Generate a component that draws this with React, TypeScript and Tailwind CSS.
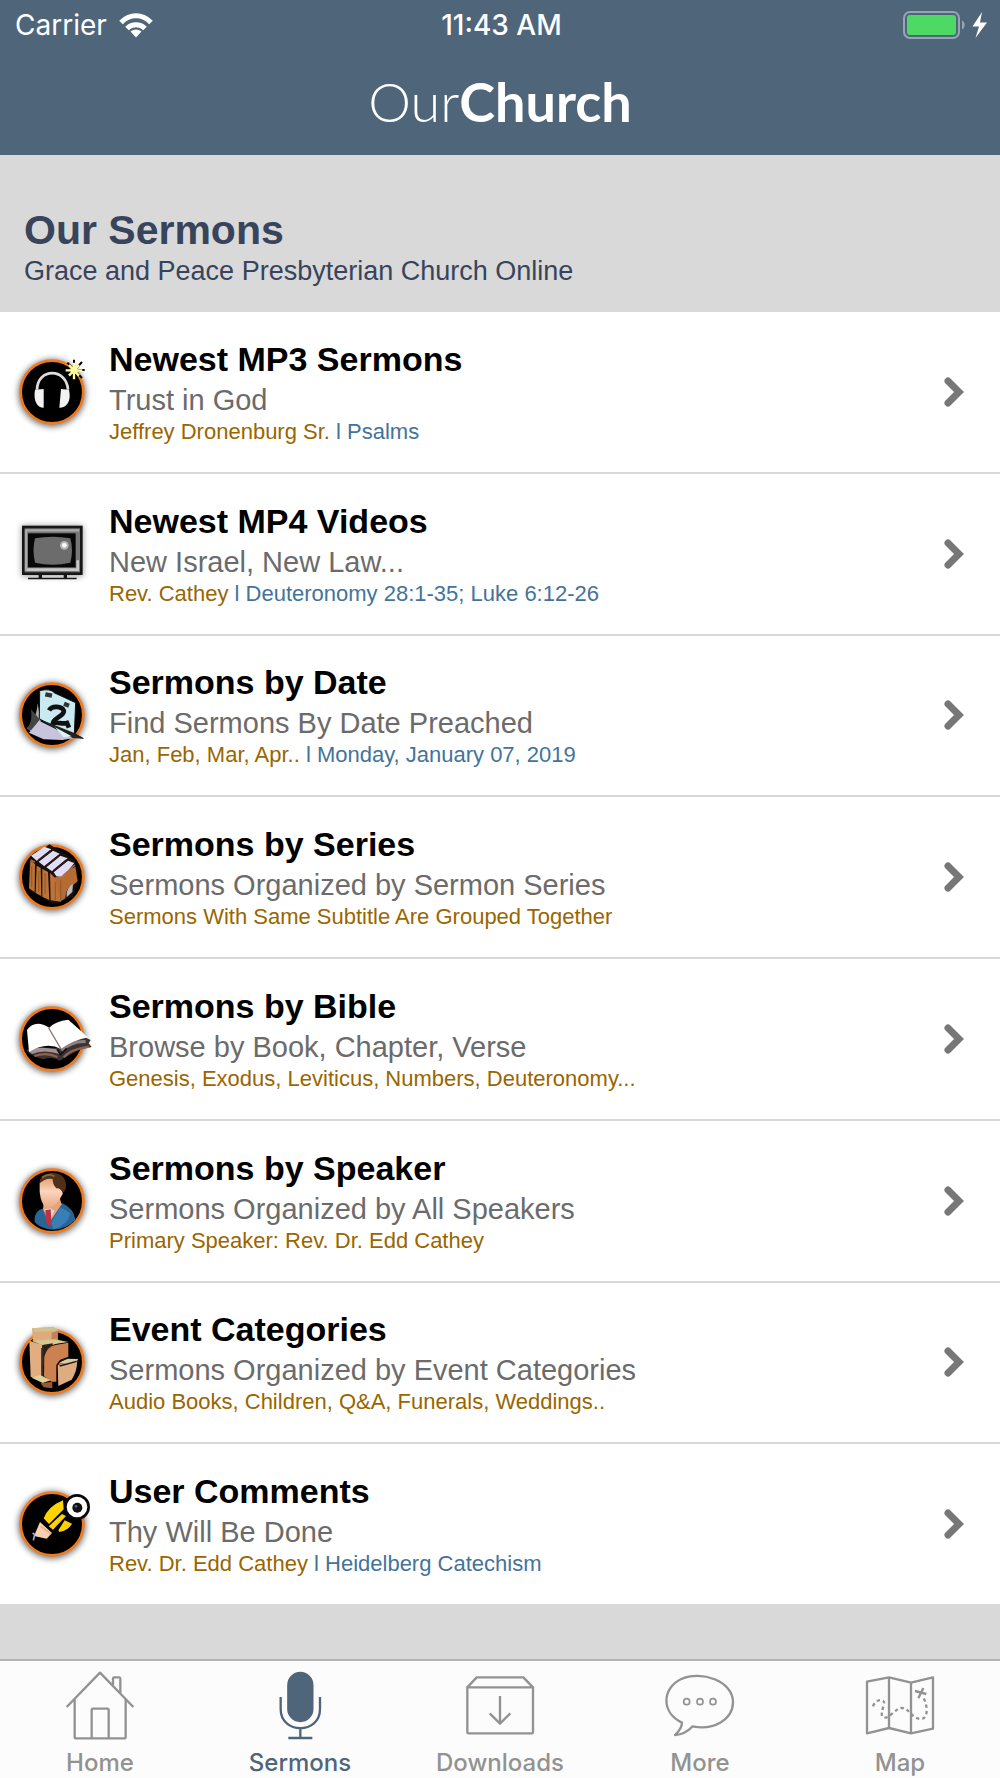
import type { ReactNode } from "react";

const WifiIcon = () => (
  <svg width="34" height="26" viewBox="0 0 34 26" aria-hidden="true">
    <g fill="none" stroke="#fff" strokeWidth="5">
      <path d="M2 10.5C10.500 1.500 23.500 1.500 32 10.500" />
      <path d="M8 16.500C13 11.500 21 11.500 26 16.500" />
    </g>
    <path d="M17 25.500L11.500 19.500C14.500 16.800 19.500 16.800 22.500 19.500Z" fill="#fff" />
  </svg>
);

const BatteryIcon = () => (
  <svg width="85" height="28" viewBox="0 0 85 28" aria-hidden="true">
    <rect x="1" y="1" width="55" height="26" rx="6" fill="none" stroke="#97a5b2" strokeWidth="2" />
    <rect x="4" y="4" width="49" height="20" rx="3" fill="#4cd964" />
    <path d="M59 9.500C62.500 10.500 62.500 17.500 59 18.500Z" fill="#97a5b2" />
    <path d="M79 1L69.500 15.500H76L72.500 27L84 11.500H77Z" fill="#fff" />
  </svg>
);

// black disc with the orange ring, shared by most of the list icons
const Disc = ({ cy }: { cy: number }) => (
  <>
    <circle cx="155" cy={cy + 3} r="101" fill="#000" opacity="0.55" filter="url(#glow)" />
    <circle cx="155" cy={cy} r="94" fill="#000" stroke="#f07a1c" strokeWidth="8" />
  </>
);

const HeadphonesIcon = () => (
  <g transform="translate(-35 -95)">
    <Disc cy={215} />
    <path d="M110 208C112 142 198 142 203 208" fill="none" stroke="#ddd" strokeWidth="8" />
    <path d="M104 208L130 206V262C112 262 98 244 104 208Z" fill="#f2f2f2" />
    <path d="M206 208L182 206L177 262C198 262 214 244 206 208Z" fill="#f2f2f2" />
    <g stroke="#000" strokeWidth="6">
      <path d="M221 118V178M192 149H253M201 127L245 173M245 125L201 173" />
    </g>
    <g stroke="#ffffa0" strokeWidth="7">
      <path d="M221 127V177M196 150H246M206 134L236 166M236 134L206 166" />
    </g>
    <circle cx="221" cy="150" r="11" fill="#ffff9c" />
  </g>
);

const TvIcon = () => (
  <g transform="translate(-35 -521)">
    <rect x="64" y="556" width="184" height="152" fill="#000" opacity="0.4" filter="url(#glow)" />
    <path d="M115 700H125V712H190V700H200V712H229V717H83V712H115Z" fill="#161616" />
    <rect x="69" y="560" width="174" height="140" fill="#777" stroke="#161616" strokeWidth="8" />
    <path d="M77 692V570H236" fill="none" stroke="#aaa" strokeWidth="7" />
    <path d="M80 688H232V660" fill="none" stroke="#c8c8c8" strokeWidth="8" />
    <rect x="83" y="579" width="143" height="102" fill="#080808" />
    <path d="M104 594Q157 584 210 594Q220 630 210 667Q157 679 104 667Q95 630 104 594Z" fill="#6c6c6c" />
    <circle cx="192" cy="615" r="13" fill="#b5b5b5" />
    <circle cx="192" cy="615" r="7" fill="#fff" />
  </g>
);

const DateIcon = () => (
  <g transform="translate(-35 -45)">
    <Disc cy={165} />
    <path d="M112 130C109 170 95 190 80 205L98 218L122 190Z" fill="#aaa" />
    <path d="M92 148C96 180 90 195 80 205L98 214L118 178Z" fill="#444" />
    <path d="M116 182L86 218L130 238L185 240L222 234Z" fill="#c8c4dc" />
    <path d="M118 92Q150 84 163 99L226 128L222 222L246 234L200 226L117 176Z" fill="#c8eaf0" stroke="#101418" strokeWidth="3" />
    <path d="M146 151C155 135 185 139 190 151C195 166 158 176 158 189C174 186 187 193 200 189L206 203" fill="none" stroke="#111" strokeWidth="14" />
    <path d="M135 103L155 107M191 131L206 137" stroke="#333" strokeWidth="13" />
    <path d="M119 178L217 234L253 236L224 220" fill="#222" />
    <path d="M164 202L214 229L190 232Z" fill="#def5fa" />
  </g>
);

const SeriesIcon = () => (
  <g transform="translate(-35 -50)">
    <Disc cy={170} />
    <path d="M86 118L147 72L224 120L232 180L218 230L157 251L85 208Z" fill="#17100b" />
    <path d="M90 121L104 131L103 215L86 204ZM109 136L121 143L123 227L106 218ZM126 146L143 155L147 239L126 229ZM149 158L164 172L182 168V244L151 240Z" fill="#bd7338" />
    <path d="M164 172L225 139L232 183L218 194Q196 199 195 234L181 243Z" fill="#b66b33" />
    <path d="M92 106L132 79L153 87L110 122ZM115 124L158 91L178 100L132 138ZM138 141L180 106L202 114L155 153ZM160 156L203 121L222 128L190 168L168 168Z" fill="#e0ddf4" />
    <path d="M112 122L151 91M134 139L176 106M159 152L199 119" stroke="#2a1c18" strokeWidth="6" />
    <path d="M91 119L103 126M186 168L224 134" stroke="#b4683a" strokeWidth="5" />
    <path d="M199 231Q195 203 218 190L216 215Z" fill="#b9b9b9" />
    <path d="M94 137V200M134 158V222M165 184V239M181 180V238M115 151V214" stroke="#9c5c2a" strokeWidth="4" />
  </g>
);

const BibleIcon = () => (
  <g transform="translate(-35 -57)">
    <Disc cy={177} />
    <path d="M78 211Q90 228 128 238Q160 229 178 242Q210 223 237 209L274 201L265 190L271 180L245 168L180 204L97 202Z" fill="#3b3232" />
    <path d="M87 215Q104 195 169 208L178 222Q130 207 95 222Z" fill="#a29291" />
    <path d="M102 228Q140 215 171 231M190 232Q210 208 266 200" fill="none" stroke="#946150" strokeWidth="7" />
    <path d="M184 212Q215 183 256 185" fill="none" stroke="#8c8084" strokeWidth="9" />
    <path d="M80 150Q104 116 147 143Q165 123 204 119L263 172Q215 182 182 207Q139 183 86 216Z" fill="#fff" />
    <path d="M145 144L182 207" stroke="#8d6f70" strokeWidth="4" />
    <path d="M170 208L181 224L199 205" fill="none" stroke="#171111" strokeWidth="5" />
  </g>
);

const SpeakerIcon = () => (
  <g transform="translate(-35 -63)">
    <Disc cy={183} />
    <path d="M103 246Q100 211 132 205L186 190Q221 206 225 239Q200 268 155 269Q120 266 103 246Z" fill="#286496" />
    <path d="M128 207L145 251L184 193L179 177L131 176Z" fill="#e7a379" />
    <path d="M181 202L151 249L160 268Q203 255 210 220Z" fill="#397fb5" />
    <path d="M132 208L146 250L162 212L150 205Z" fill="#d7dce8" />
    <path d="M135 211L151 208L154 251L145 258L136 242Z" fill="#bc3443" />
    <path d="M118 130Q124 101 157 103Q183 113 181 150Q188 149 187 162Q178 181 166 193Q150 209 139 204Q122 193 118 156Z" fill="url(#face)" />
    <path d="M118 126Q119 103 154 99Q189 98 196 126Q201 148 187 158Q180 143 168 145Q156 132 157 117Q136 112 118 130Z" fill="#513018" />
    <path d="M125 113Q145 98 162 109" fill="none" stroke="#8b6332" strokeWidth="6" />
  </g>
);

const EventIcon = () => (
  <g transform="translate(-35 -68)">
    <Disc cy={188} />
    <path d="M95 87L159 83L173 94V130L158 137L126 134L98 125Z" fill="#dfab7d" />
    <path d="M95 87L159 83L173 94L104 98Z" fill="#d0c190" />
    <path d="M154 100L173 94V123L153 134Z" fill="#c68057" />
    <path d="M87 124L126 136V246L91 232Z" fill="#e1ae81" />
    <path d="M94 124L164 120L204 128L129 139Z" fill="#d4c893" />
    <path d="M126 137L157 132V180L126 202Z" fill="#2c2118" />
    <path d="M132 172Q140 142 165 137L204 130V172L180 181L168 198V247L154 247L131 231Z" fill="#cd8151" />
    <path d="M94 235L120 227L151 243L127 251Z" fill="#ded09a" />
    <path d="M121 252L156 247V267L130 264Z" fill="#985a31" />
    <path d="M172 196L231 183Q230 218 214 241L174 260Z" fill="#deac82" />
    <path d="M172 193L197 178L234 179L224 190Z" fill="#d9cba2" />
    <path d="M170 198L178 186L204 176M229 186L178 200" fill="none" stroke="#1b1410" strokeWidth="4" />
    <path d="M126 146V229" stroke="#3b2b20" strokeWidth="7" />
  </g>
);

const CommentsIcon = () => (
  <g transform="translate(-35 -60)">
    <Disc cy={180} />
    <path d="M130 163Q144 127 188 109L190 136L146 180Z" fill="#ffd400" />
    <path d="M145 187L185 150L197 156L158 197ZM174 199L193 169L215 179Q204 200 177 204Z" fill="#ffd000" />
    <path d="M119 174L155 207L139 224L101 216Z" fill="#fbd0af" />
    <path d="M121 187L151 209" stroke="#e4a68c" strokeWidth="4" />
    <path d="M97 207L103 212L99 229" fill="none" stroke="#9aabea" strokeWidth="5" />
    <circle cx="230" cy="129" r="35" fill="#fff" stroke="#080808" strokeWidth="8" />
    <circle cx="231" cy="131" r="15" fill="#111" />
    <circle cx="227" cy="127" r="4" fill="#526080" />
  </g>
);

type Sermon = { icon: ReactNode; title: string; sub: string; note: string; extra?: string };

const sermons: Sermon[] = [
  { icon: <HeadphonesIcon />, title: "Newest MP3 Sermons", sub: "Trust in God", note: "Jeffrey Dronenburg Sr.", extra: "Psalms" },
  { icon: <TvIcon />, title: "Newest MP4 Videos", sub: "New Israel, New Law...", note: "Rev. Cathey", extra: "Deuteronomy 28:1-35; Luke 6:12-26" },
  { icon: <DateIcon />, title: "Sermons by Date", sub: "Find Sermons By Date Preached", note: "Jan, Feb, Mar, Apr..", extra: "Monday, January 07, 2019" },
  { icon: <SeriesIcon />, title: "Sermons by Series", sub: "Sermons Organized by Sermon Series", note: "Sermons With Same Subtitle Are Grouped Together" },
  { icon: <BibleIcon />, title: "Sermons by Bible", sub: "Browse by Book, Chapter, Verse", note: "Genesis, Exodus, Leviticus, Numbers, Deuteronomy..." },
  { icon: <SpeakerIcon />, title: "Sermons by Speaker", sub: "Sermons Organized by All Speakers", note: "Primary Speaker: Rev. Dr. Edd Cathey" },
  { icon: <EventIcon />, title: "Event Categories", sub: "Sermons Organized by Event Categories", note: "Audio Books, Children, Q&A, Funerals, Weddings.." },
  { icon: <CommentsIcon />, title: "User Comments", sub: "Thy Will Be Done", note: "Rev. Dr. Edd Cathey", extra: "Heidelberg Catechism" },
];

const SermonRow = ({ icon, title, sub, note, extra }: Sermon) => (
  <li className="flex flex-1 border-b-2 border-[#d9d9d9] last:border-b-0">
    <a href="#" className="flex flex-1 items-center pl-3 pr-9">
      <svg className="h-20 w-20 shrink-0 overflow-visible" viewBox="0 0 240 240" aria-hidden="true">
        {icon}
      </svg>
      <div className="ml-[17px] min-w-0 flex-1 pb-[2px]">
        <h2 className="text-[34px] leading-10 font-bold text-black">{title}</h2>
        <p className="text-[29px] leading-[42px] text-[#6b6b6b]">{sub}</p>
        <p className="text-[22px] leading-[22px] text-[#996600]">
          {note}
          {extra && <span className="text-[#43739b]"> l {extra}</span>}
        </p>
      </div>
      <svg width="20" height="32" viewBox="0 0 20 32" aria-hidden="true">
        <path d="M4 5L15 16L4 27" fill="none" stroke="#777" strokeWidth="7" strokeLinecap="round" />
      </svg>
    </a>
  </li>
);

const tabs = [
  {
    label: "Home",
    box: "180 90 240 210",
    icon: (
      <path d="M200 201L300 98L400 201M224 178V291Q224 295 228 295H374Q377 295 377 291V178M275 295V210Q275 206 279 206H322Q326 206 326 210V295M339 137V116Q339 112 343 112H358Q361 112 361 116V159" />
    ),
  },
  {
    label: "Sermons",
    box: "780 90 240 210",
    active: true,
    icon: (
      <>
        <rect x="865" y="99" width="72" height="144" rx="36" fill="currentColor" />
        <path d="M842 171V207C842 284 960 284 960 207V171M901 265V294M865 294H937" />
      </>
    ),
  },
  {
    label: "Downloads",
    box: "1378 90 240 210",
    icon: (
      <path d="M1400 142L1428 112H1568L1597 142V276Q1597 280 1593 280H1404Q1400 280 1400 276ZM1400 142H1597M1498 168V250M1467 220L1498 251L1529 220" />
    ),
  },
  {
    label: "More",
    box: "477 90 240 210",
    icon: (
      <>
        <path d="M543 248C480 218 482 145 541 117C600 91 696 122 696 186C696 239 637 272 575 259Q552 284 522 285Q543 265 543 248Z" />
        <g strokeWidth="5">
          <circle cx="557" cy="185" r="9" />
          <circle cx="597" cy="185" r="9" />
          <circle cx="636" cy="185" r="9" />
        </g>
      </>
    ),
  },
  {
    label: "Map",
    box: "1078 90 240 210",
    icon: (
      <>
        <path d="M1099 125L1165 112L1231 128L1297 112V266L1231 280L1165 264L1099 280ZM1165 112V264M1231 128V280M1243 153L1277 162M1268 144L1253 175" />
        <path d="M1117 199C1125 176 1155 174 1150 193C1145 211 1138 229 1150 233C1169 235 1184 204 1204 204C1225 204 1235 239 1263 237C1284 233 1280 195 1269 175" strokeDasharray="10 9" />
      </>
    ),
  },
];

const TabBar = () => (
  <nav className="grid grid-cols-5 border-t-2 border-[#b4b4b4] bg-[#fcfcfc] pt-[9px] font-[Inter,sans-serif]">
    {tabs.map((tab) => (
      <a
        key={tab.label}
        href="#"
        aria-current={tab.active ? "page" : undefined}
        className="flex flex-col items-center gap-2 text-[#929292] aria-[current=page]:text-[#4f657a]"
      >
        <svg width="80" height="70" viewBox={tab.box} fill="none" stroke="currentColor" strokeWidth="7" strokeLinejoin="round" aria-hidden="true">
          {tab.icon}
        </svg>
        <span className="text-2xl leading-[30px] font-medium">{tab.label}</span>
      </a>
    ))}
  </nav>
);

export default function App() {
  return (
    <div className="flex min-h-screen flex-col bg-[#d9d9d9] font-['Liberation_Sans',Arial,sans-serif]">
      {/* gradients and blur used by the list icons */}
      <svg className="absolute h-0 w-0" aria-hidden="true">
        <defs>
          <filter id="glow" x="-30%" y="-30%" width="160%" height="160%">
            <feGaussianBlur stdDeviation="9" />
          </filter>
          <linearGradient id="face" x1="0" y1="0" x2="0" y2="1">
            <stop offset="0" stopColor="#d99160" />
            <stop offset="0.5" stopColor="#fbd5bd" />
            <stop offset="1" stopColor="#eaa77e" />
          </linearGradient>
        </defs>
      </svg>

      <header className="bg-[#4f657a] text-white">
        <div className="grid h-[50px] grid-cols-3 items-center pr-3 pl-[15px] font-[Inter,sans-serif] text-[28px]">
          <div className="flex items-center gap-3">
            <span>Carrier</span>
            <WifiIcon />
          </div>
          <time className="text-center font-medium">11:43 AM</time>
          <div className="flex justify-end">
            <BatteryIcon />
          </div>
        </div>
        <div className="flex h-[105px] justify-center pt-[22px] font-[Lato,sans-serif] text-[54px] leading-[60px]">
          <span className="font-light">Our</span>
          <span className="font-bold">Church</span>
        </div>
      </header>

      <main className="flex flex-1 flex-col pb-[55px]">
        <div className="px-6 pt-[51px] pb-6 text-[#38435c]">
          <h1 className="text-[41px] leading-[48px] font-bold">Our Sermons</h1>
          <p className="text-[27px] leading-[34px]">Grace and Peace Presbyterian Church Online</p>
        </div>
        <ul className="flex flex-1 flex-col bg-white">
          {sermons.map((sermon) => (
            <SermonRow key={sermon.title} {...sermon} />
          ))}
        </ul>
      </main>

      <TabBar />
    </div>
  );
}
